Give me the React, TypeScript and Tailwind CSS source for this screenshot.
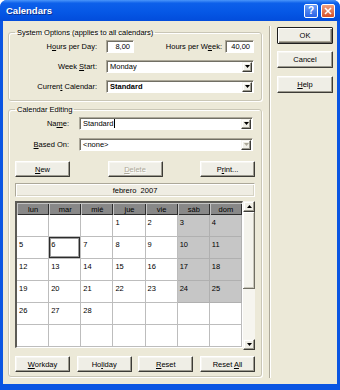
import React from "react";

function U({ children }: { children: React.ReactNode }) {
  return <u className="underline decoration-1 underline-offset-[1px]">{children}</u>;
}

function Btn({
  children,
  className = "",
  disabled = false,
  def = false,
}: {
  children: React.ReactNode;
  className?: string;
  disabled?: boolean;
  def?: boolean;
}) {
  return (
    <div
      className={`flex items-center justify-center rounded-[1px] border bg-[#efeee6] ${
        def
          ? "border-[#1e1e1e] shadow-[inset_1px_1px_0_#ffffff,inset_-1px_-1px_0_#6f6d64,inset_-2px_-2px_0_#aca899]"
          : "border-t-[#ffffff] border-l-[#ffffff] border-r-[#3c3b36] border-b-[#3c3b36] shadow-[inset_-1px_-1px_0_#9d9b90,inset_1px_1px_0_#f7f6f1]"
      } ${disabled ? "text-[#aca899] [text-shadow:1px_1px_0_#ffffff]" : "text-black"} ${className}`}
    >
      <span className="whitespace-pre">{children}</span>
    </div>
  );
}

function Arrow({ dir = "down", disabled = false, className = "" }: { dir?: "up" | "down"; disabled?: boolean; className?: string }) {
  return (
    <div
      className={`flex items-center justify-center bg-[#efeee6] border border-t-[#f7f6f1] border-l-[#f7f6f1] border-r-[#3c3b36] border-b-[#3c3b36] shadow-[inset_-1px_-1px_0_#9d9b90,inset_1px_1px_0_#ffffff] ${className}`}
    >
      <svg width="5" height="3" viewBox="0 0 5 3">
        {dir === "down" ? (
          <polygon points="0,0 5,0 2.5,3" fill={disabled ? "#aca899" : "#000"} />
        ) : (
          <polygon points="0,3 5,3 2.5,0" fill={disabled ? "#aca899" : "#000"} />
        )}
      </svg>
    </div>
  );
}

const sunken =
  "bg-white border border-t-[#aca899] border-l-[#aca899] border-b-white border-r-white shadow-[inset_1px_1px_0_#716f64]";

function Combo({ children, disabled = false, className = "" }: { children: React.ReactNode; disabled?: boolean; className?: string }) {
  return (
    <div className={`h-[13px] flex items-center pl-[3px] pr-[1px] ${sunken} ${className}`}>
      <div className="flex-1 flex items-center">{children}</div>
      <Arrow disabled={disabled} className="w-[10px] h-[10px]" />
    </div>
  );
}

const heads = ["lun", "mar", "mié", "jue", "vie", "sáb", "dom"];
const rows = [
  ["", "", "", "1", "2", "3", "4"],
  ["5", "6", "7", "8", "9", "10", "11"],
  ["12", "13", "14", "15", "16", "17", "18"],
  ["19", "20", "21", "22", "23", "24", "25"],
  ["26", "27", "28", "", "", "", ""],
  ["", "", "", "", "", "", ""],
];

export default function App() {
  return (
    <div className="w-[340px] h-[390px] flex flex-col bg-[#0a55e2] rounded-t-[7px] overflow-hidden font-['Liberation_Sans',Arial,sans-serif] text-[7.5px] leading-[9px] text-black">
      {/* Title bar */}
      <div className="h-[21px] shrink-0 flex items-center justify-between pl-[6px] pr-[5px] bg-[linear-gradient(to_bottom,#4a96fa_0%,#0d60ea_15%,#0658e6_55%,#024cdb_100%)]">
        <span className="text-white font-bold text-[9.5px] leading-[10px] [text-shadow:1px_1px_0_#0b2f8f]">Calendars</span>
        <div className="flex gap-[3px]">
          <div className="w-[14px] h-[14px] rounded-[2px] border border-white bg-[linear-gradient(to_bottom,#6a9ef8,#2a62e6)] flex items-center justify-center text-white font-bold text-[10px] leading-[10px]">
            ?
          </div>
          <div className="w-[14px] h-[14px] rounded-[2px] border border-white bg-[linear-gradient(to_bottom,#f0a080,#d6502a)] flex items-center justify-center">
            <svg width="8" height="8" viewBox="0 0 8 8">
              <path d="M1 1 L7 7 M7 1 L1 7" stroke="#fff" strokeWidth="1.6" />
            </svg>
          </div>
        </div>
      </div>

      {/* Body */}
      <div className="flex-1 mx-[3px] mb-[6px] bg-[#ece9d8] flex">
        {/* Left column */}
        <div className="w-[259px] shrink-0 pl-[5px] pt-[7px] flex flex-col">
          {/* System Options */}
          <fieldset className="w-[254px] border border-[#c9c6b6] rounded-[3px] shadow-[1px_1px_0_#ffffff,inset_1px_1px_0_#ffffff] px-0">
            <legend className="ml-[6px] px-[2px] leading-[9px]">System Options (applies to all calendars)</legend>
            <div className="pt-[3px] pb-[7px] flex flex-col gap-[7px]">
              <div className="flex items-center h-[13px]">
                <div className="w-[88px] text-right">
                  H<U>o</U>urs per Day:
                </div>
                <div className={`ml-[9px] w-[28px] h-[13px] flex items-center justify-end pr-[3px] ${sunken}`}>8,00</div>
                <div className="flex-1 text-right pr-[3px]">
                  Hours per W<U>e</U>ek:
                </div>
                <div className={`w-[29px] h-[13px] mr-[7px] flex items-center justify-end pr-[3px] ${sunken}`}>40,00</div>
              </div>
              <div className="flex items-center h-[13px]">
                <div className="w-[88px] text-right">
                  Week <U>S</U>tart:
                </div>
                <Combo className="ml-[9px] w-[148px]">Monday</Combo>
              </div>
              <div className="flex items-center h-[13px]">
                <div className="w-[88px] text-right">
                  Curren<U>t</U> Calendar:
                </div>
                <Combo className="ml-[9px] w-[148px]">
                  <span className="font-bold">Standard</span>
                </Combo>
              </div>
            </div>
          </fieldset>

          {/* Calendar Editing */}
          <fieldset className="mt-[4px] w-[254px] border border-[#c9c6b6] rounded-[3px] shadow-[1px_1px_0_#ffffff,inset_1px_1px_0_#ffffff] px-0">
            <legend className="ml-[6px] px-[2px] leading-[9px]">Calendar Editing</legend>
            <div className="pt-[3px] pb-[4px] px-[6px] flex flex-col">
              <div className="flex items-center h-[13px]">
                <div className="w-[54px] text-right">
                  Na<U>m</U>e:
                </div>
                <Combo className="ml-[10px] flex-1 mr-[2px]">
                  <span>Standard</span>
                  <span className="ml-[1px] w-[1px] h-[9px] bg-black" />
                </Combo>
              </div>
              <div className="mt-[8px] flex items-center h-[13px]">
                <div className="w-[54px] text-right">
                  <U>B</U>ased On:
                </div>
                <Combo disabled className="ml-[10px] flex-1 mr-[2px]">
                  &lt;none&gt;
                </Combo>
              </div>
              <div className="mt-[10px] flex justify-between h-[16px]">
                <Btn className="w-[55px]">
                  <U>N</U>ew
                </Btn>
                <Btn className="w-[55px]" disabled>
                  <U>D</U>elete
                </Btn>
                <Btn className="w-[55px]">
                  P<U>r</U>int...
                </Btn>
              </div>
              <div className="mt-[6px] h-[14px] flex items-center justify-center border border-t-[#aca899] border-l-[#aca899] border-b-white border-r-white bg-[#efede3] shadow-[inset_1px_1px_0_#ffffff,inset_-1px_-1px_0_#d6d3c4] whitespace-pre">
                febrero  2007
              </div>
              <div className="mt-[4px] flex">
                {/* Grid */}
                <div className="w-[228px] h-[147px] flex flex-col bg-white border-t-2 border-l-2 border-t-[#5c5b55] border-l-[#5c5b55] border-b border-r border-b-white border-r-white">
                  <div className="grid grid-cols-7 h-[12px] bg-[#a6a6a6]">
                    {heads.map((h) => (
                      <div
                        key={h}
                        className="bg-[#888888] flex items-center justify-center shadow-[inset_1px_1px_0_#c4c4c4,inset_-1px_-1px_0_#2e2e2e] text-black"
                      >
                        {h}
                      </div>
                    ))}
                  </div>
                  <div className="flex-1 grid grid-cols-7 grid-rows-6">
                    {rows.map((r, ri) =>
                      r.map((d, ci) => {
                        const weekend = ci >= 5 && d !== "";
                        const sel = d === "6";
                        return (
                          <div
                            key={`${ri}-${ci}`}
                            className={`border-r border-b ${weekend ? "bg-[#c6c6c6] border-[#b0b0b0]" : "bg-white border-[#bdbdbd]"} pl-[2px] pt-[3px] ${
                              sel ? "shadow-[inset_0_0_0_1px_#2c2c2c,inset_0_0_0_2px_#9c9c9c]" : ""
                            }`}
                          >
                            {d}
                          </div>
                        );
                      })
                    )}
                  </div>
                </div>
                {/* Scrollbar */}
                <div className="w-[12px] h-[149px] flex flex-col bg-[#f6f5ef]">
                  <Arrow dir="up" className="h-[11px] w-[12px]" />
                  <div className="h-[77px] bg-[#f4f3ec] shadow-[inset_-1px_-1px_0_#716f64,inset_1px_1px_0_#ffffff,inset_-2px_-2px_0_#c9c7bb]" />
                  <div className="flex-1" />
                  <Arrow dir="down" className="h-[11px] w-[12px]" />
                </div>
              </div>
              <div className="mt-[6px] flex justify-between h-[16px]">
                <Btn className="w-[55px]">
                  <U>W</U>orkday
                </Btn>
                <Btn className="w-[55px]">
                  Ho<U>l</U>iday
                </Btn>
                <Btn className="w-[55px]">
                  <U>R</U>eset
                </Btn>
                <Btn className="w-[55px]">
                  Reset <U>A</U>ll
                </Btn>
              </div>
            </div>
          </fieldset>
        </div>

        {/* Separator */}
        <div className="ml-[7px] mt-[5px] mb-[6px] w-[2px] border-l border-l-[#aca899] border-r border-r-white" />

        {/* Right buttons */}
        <div className="ml-[6px] pt-[6px] w-[56px] flex flex-col">
          <Btn def className="h-[17px]">
            OK
          </Btn>
          <Btn className="mt-[7px] h-[17px]">Cancel</Btn>
          <Btn className="mt-[8px] h-[17px]">
            <U>H</U>elp
          </Btn>
        </div>
      </div>
    </div>
  );
}
